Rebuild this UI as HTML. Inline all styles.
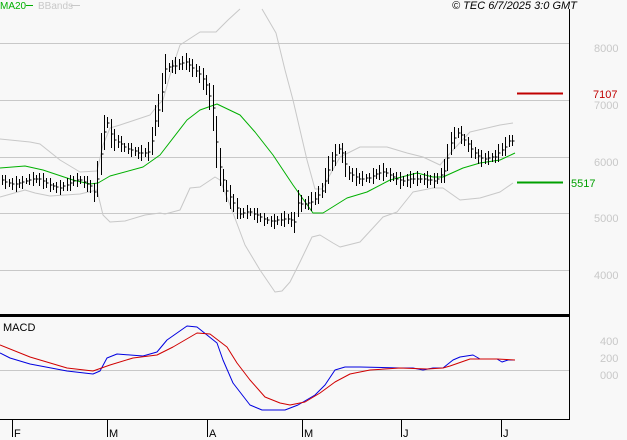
<!DOCTYPE html><html><head><style>body{margin:0;background:#f8f8f8;width:627px;height:440px;overflow:hidden;font-family:"Liberation Sans",sans-serif}</style></head><body>
<svg id="s" width="627" height="440" xmlns="http://www.w3.org/2000/svg" style="display:block">
<rect width="627" height="440" fill="#f8f8f8"/>
<g stroke="#c8c8c8" stroke-width="1">
<line x1="0" y1="43.5" x2="569" y2="43.5"/><line x1="0" y1="100.5" x2="569" y2="100.5"/><line x1="0" y1="157.5" x2="569" y2="157.5"/><line x1="0" y1="213.5" x2="569" y2="213.5"/><line x1="0" y1="270.5" x2="569" y2="270.5"/><line x1="0" y1="370.5" x2="569" y2="370.5"/>
</g>
<g fill="#c8c8c8" font-size="11"><text x="594" y="52">8000</text><text x="594" y="109">7000</text><text x="594" y="166">6000</text><text x="594" y="222">5000</text><text x="594" y="279">4000</text><text x="600" y="345">400</text><text x="600" y="362">200</text><text x="600" y="379">000</text></g>
<text x="593" y="98" fill="#c00000" font-size="11">7107</text>
<text x="571" y="187" fill="#00a000" font-size="11">5517</text>
<line x1="517" y1="93.5" x2="563" y2="93.5" stroke="#c00000" stroke-width="2"/>
<line x1="517" y1="182.5" x2="563" y2="182.5" stroke="#00a000" stroke-width="2"/>
<g fill="none" stroke="#c8c8c8" stroke-linejoin="round">
<polyline points="0,139 30,142 40,144 60,160 80,172 97,171 103,145 110,128 120,125 135,120 150,115 158,105 163,100 170,75 180,45 200,32 216,32 228,20 240,9"/>
<polyline points="262,9 276,33 285,70 293,100 307,160 315,189 322,189 340,157 360,147 387,147 407,153 423,157 440,165 453,150 470,132 500,125 513,123"/>
<polyline points="0,197 25,190 35,193 50,196 80,194 97,190 103,215 110,222 125,221 145,215 160,213 165,214 180,210 190,188 200,187 215,177 220,180 230,205 245,245 260,270 275,292 282,291 290,282 300,262 312,237 320,235 333,243 340,247 360,242 383,217 397,212 413,192 433,188 443,188 460,200 480,198 500,192 513,183"/>
</g>
<polyline fill="none" stroke="#00b000" stroke-linejoin="round" points="0,168 25,166 43,170 73,180 90,184 98,183 110,176 143,167 160,155 187,120 200,110 217,104 240,115 255,132 273,155 293,185 313,213 323,213 347,198 367,192 390,180 417,173 433,177 443,177 463,168 480,163 500,160 515,153"/>
<g id="bars"></g>
<polyline fill="none" stroke="#0000e0" stroke-linejoin="round" points="0,353 10,358 30,364 67,371 93,374 100,371 107,358 117,354 143,356 157,352 167,340 187,326 197,327 207,335 217,343 223,360 233,383 250,405 262,410 285,410 298,405 315,395 325,385 335,370 345,367 360,367 400,368 413,368 423,370 433,368 443,368 453,360 460,357 473,355 480,359 497,359 502,362 508,360 515,360"/>
<polyline fill="none" stroke="#d00000" stroke-linejoin="round" points="0,345 30,357 67,368 93,371 110,365 133,358 157,355 173,347 197,333 210,334 227,347 237,363 250,380 265,397 280,403 290,405 305,402 320,393 335,382 350,374 370,370 400,368 427,369 443,368 450,366 470,359 497,359 515,360"/>
<line x1="0" y1="315.5" x2="569" y2="315.5" stroke="#000" stroke-width="3"/>
<line x1="569.5" y1="9" x2="569.5" y2="419" stroke="#000"/>
<line x1="0" y1="419.5" x2="570" y2="419.5" stroke="#000"/>
<g stroke="#000"><line x1="12.5" y1="419" x2="12.5" y2="437"/><line x1="107.5" y1="419" x2="107.5" y2="437"/><line x1="207.5" y1="419" x2="207.5" y2="437"/><line x1="302.5" y1="419" x2="302.5" y2="437"/><line x1="401.5" y1="419" x2="401.5" y2="437"/><line x1="501.5" y1="419" x2="501.5" y2="437"/></g>
<g font-size="11" fill="#000"><text x="14" y="437">F</text><text x="109" y="437">M</text><text x="209" y="437">A</text><text x="304" y="437">M</text><text x="403" y="437">J</text><text x="503" y="437">J</text>
<text x="3" y="331">MACD</text>
<text x="452" y="9" font-style="italic">© TEC 6/7/2025 3:0 GMT</text></g>
<text x="0" y="9" font-size="10" fill="#00b000">MA20</text><line x1="26" y1="5.5" x2="33" y2="5.5" stroke="#00b000"/>
<text x="38" y="9" font-size="10" fill="#c8c8c8">BBands</text><line x1="71" y1="5.5" x2="80" y2="5.5" stroke="#c8c8c8"/>
</svg>
<script>
var p=[[0,181],[20,181],[40,182],[60,185],[80,183],[90,185],[95,192],[100,155],[104,130],[108,120],[112,140],[125,150],[140,150],[150,150],[155,122],[160,108],[165,72],[175,65],[185,58],[195,70],[205,85],[213,110],[218,160],[225,185],[235,205],[240,215],[250,215],[270,218],[290,222],[295,225],[297,205],[310,200],[322,190],[330,168],[340,148],[348,170],[360,177],[370,180],[385,172],[395,175],[405,180],[420,182],[435,178],[445,168],[450,145],[458,135],[470,148],[480,155],[495,158],[505,150],[510,140],[515,143]];
function f(x){for(var i=1;i<p.length;i++)if(x<=p[i][0]){var a=p[i-1],b=p[i];return a[1]+(b[1]-a[1])*(x-a[0])/(b[0]-a[0]);}return p[p.length-1][1];}
var d="";for(var x=2;x<=515;x+=3.4){var xx=Math.round(x)+.5,y=f(x),sl=Math.abs(f(x+3)-f(x-3)),h=6+((x*7)%10)+sl*0.8,r=Math.sin(x*1.7)*3;
d+="M"+xx+","+(y-h/2+r).toFixed(0)+"V"+(y+h/2+r).toFixed(0)+"M"+xx+","+(y+r).toFixed(0)+"h2";}
var g=document.createElementNS("http://www.w3.org/2000/svg","path");g.setAttribute("d",d);g.setAttribute("stroke","#000");g.setAttribute("fill","none");document.getElementById("bars").appendChild(g);
</script>
</body></html>
